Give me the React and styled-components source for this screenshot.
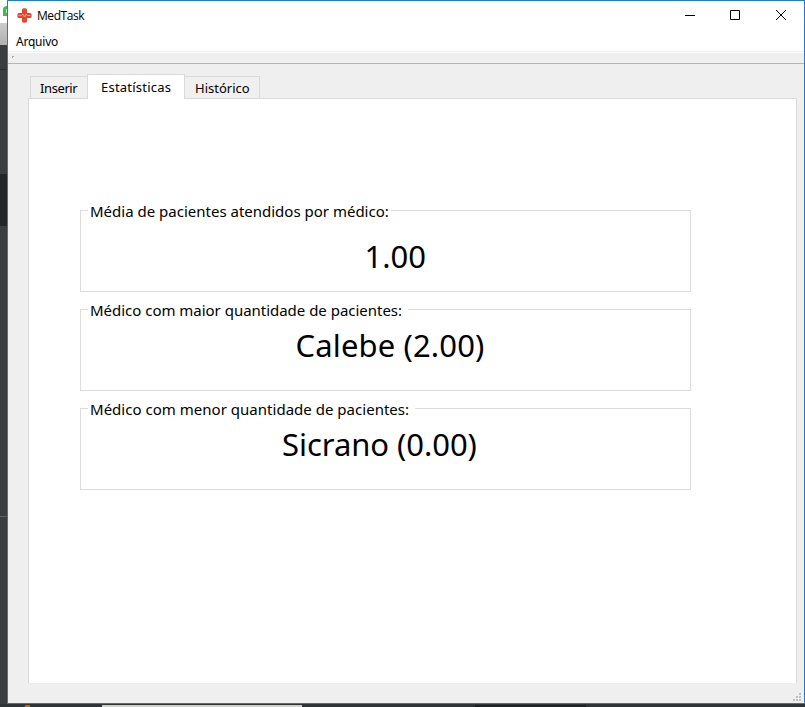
import React from 'react';
import styled, { createGlobalStyle } from 'styled-components';

const Global = createGlobalStyle`
  * { box-sizing: border-box; }
  body { margin: 0; overflow: hidden; background: #3c3d3e; font-family: "Noto Sans", sans-serif; color: #000; }
`;

const Desktop = styled.div`
  display: grid;
  grid-template: 704px 3px / 7px 798px;
  width: 805px;
  height: 707px;
`;

const Backdrop = styled.div`
  display: flex;
  flex-direction: column;
  overflow: hidden;
`;

const Band = styled.div`
  height: ${(p) => p.$h}px;
  background: ${(p) => p.$bg};
  flex: none;
`;

const BrowserBand = styled(Band)`
  display: flex;
  justify-content: flex-end;
  padding-top: 6px;
`;

const Window = styled.div`
  display: flex;
  flex-direction: column;
  border: 1px solid #1a7fd0;
  background: #efefef;
`;

const TitleBar = styled.div`
  display: flex;
  align-items: center;
  height: 28px;
  padding-left: 9px;
  background: #fff;
`;

const Title = styled.span`
  flex: 1;
  margin-left: 5px;
  padding-top: 2px;
  font: 12px/16px "Open Sans", sans-serif;
  letter-spacing: ${(p) => p.$ls}px;
`;

const WindowButton = styled.div`
  display: flex;
  justify-content: center;
  width: 46px;
`;

const MinimizeButton = styled(WindowButton)`
  padding-left: 2px;
`;

const MenuBar = styled.div`
  height: 24px;
  padding: 4px 0 0 8px;
  background: #fff;
  border-bottom: 1px solid #fff;
  box-shadow: inset 0 -1px #efefef;
  font-size: 12px;
  line-height: 17px;
`;

const MenuItem = styled.span`
  letter-spacing: ${(p) => p.$ls}px;
`;

const ToolBar = styled.div`
  height: 11px;
  padding: 2px 0 0 3px;
  border-bottom: 1px solid #b5b5b5;
  svg { display: block; }
`;

const Body = styled.div`
  flex: 1;
  display: flex;
  flex-direction: column;
  padding: 10px 7px 20px 20px;
`;

const TabList = styled.div`
  display: flex;
  align-items: flex-end;
  height: 25px;
  padding-left: 2px;
  margin-bottom: -1px;
  z-index: 1;
`;

const Tab = styled.div`
  width: ${(p) => p.$w}px;
  height: ${(p) => (p.$active ? 25 : 23)}px;
  margin-left: ${(p) => (p.$active ? -1 : 0)}px;
  padding: ${(p) => (p.$active ? '3px 0 0 13px' : p.$joined ? '2px 0 0 10px' : '2px 0 0 9px')};
  border: 1px solid #d9d9d9;
  border-left-width: ${(p) => (p.$joined ? 0 : 1)}px;
  border-bottom: ${(p) => (p.$active ? 'none' : '1px solid #d9d9d9')};
  background: ${(p) => (p.$active ? '#fff' : '#f0f0f0')};
  font-size: 13px;
  line-height: 18px;
  white-space: nowrap;
  letter-spacing: ${(p) => p.$ls}px;
`;

const Panel = styled.div`
  flex: 1;
  display: flex;
  flex-direction: column;
  gap: 17px;
  padding: 111px 0 0 51px;
  background: #fff;
  border: 1px solid #d9d9d9;
  border-bottom: none;
`;

const Group = styled.section`
  width: 611px;
  height: 82px;
  border: 1px solid #dcdcdc;
`;

const GroupTitle = styled.div`
  width: ${(p) => p.$w}px;
  height: 20px;
  margin: -10px 0 0 7px;
  padding-left: 2px;
  background: #fff;
  font-size: 15px;
  line-height: 20px;
  white-space: nowrap;
  letter-spacing: ${(p) => p.$ls}px;
`;

const Value = styled.div`
  padding: ${(p) => p.$top}px 0 0 ${(p) => p.$left}px;
  font-size: 31px;
  line-height: 42px;
  white-space: nowrap;
  letter-spacing: ${(p) => p.$ls}px;
`;

const StatusBar = styled.div`
  display: flex;
  justify-content: flex-end;
  height: 10px;
  margin-top: -10px;
  padding-right: 3px;
`;

const Taskbar = styled.div`
  grid-column: 1 / -1;
  display: flex;
  align-items: flex-end;
  background: #2f3536;
`;

const TaskSegment = styled.div`
  width: ${(p) => p.$w}px;
  height: 2px;
  background: ${(p) => p.$bg};
`;

const Logo = () => (
  <svg width="15" height="15" viewBox="0 0 15 15">
    <path d="M5 1.5Q5 .3 7.5 .3T10 1.5V5h3.5q1.2 0 1.2 2.5T13.500 10H10v3.500q0 1.200-2.500 1.200T5 13.500V10H1.500Q.3 10 .3 7.500T1.500 5H5z" fill="#e8472b" />
    <path d="M1.500 7.500h3l1.500-1.500 1.500 3 1.500-3 1.500 1.500h3" fill="none" stroke="#f5a592" strokeWidth="1" />
  </svg>
);

const stats = [
  { title: 'Média de pacientes atendidos por médico:', w: 303, ls: 0, value: '1.00', top: 14, left: 283.5, vls: 0 },
  { title: 'Médico com maior quantidade de pacientes:', w: 320, ls: -0.02, value: 'Calebe (2.00)', top: 4, left: 214.5, vls: 0.14 },
  { title: 'Médico com menor quantidade de pacientes:', w: 327, ls: 0.02, value: 'Sicrano (0.00)', top: 4, left: 201, vls: -0.05 },
];

export default function App() {
  return (
    <>
      <Global />
      <Desktop>
        <Backdrop>
          <BrowserBand $h={23} $bg="#fff">
            <svg width="4" height="10"><path d="M4 0Q0 0 0 4v6h4z" fill="#3dbb55" /><path d="M3 3h1v4H3z" fill="#b9e6c0" /></svg>
          </BrowserBand>
          <Band $h={22} $bg="linear-gradient(#ccc,#b0b0b0)" />
          <Band $h={24} $bg="#3b3c3d" />
          <Band $h={1} $bg="#2a2b2c" />
          <Band $h={104} $bg="#3c3d3e" />
          <Band $h={52} $bg="#242526" />
          <Band $h={290} $bg="#3c3d3e" />
          <Band $h={1} $bg="#606162" />
          <Band $h={187} $bg="#3c3d3e" />
        </Backdrop>
        <Window>
          <TitleBar>
            <Logo />
            <Title $ls={-0.45}>MedTask</Title>
            <MinimizeButton><svg width="10" height="10"><path d="M0 5.5h10" stroke="#000" /></svg></MinimizeButton>
            <WindowButton><svg width="10" height="10"><path d="M.5.5h9v9h-9z" fill="none" stroke="#000" /></svg></WindowButton>
            <WindowButton><svg width="10" height="10"><path d="M0 0l10 10M10 0L0 10" stroke="#000" /></svg></WindowButton>
          </TitleBar>
          <MenuBar><MenuItem $ls={-0.22}>Arquivo</MenuItem></MenuBar>
          <ToolBar><svg width="4" height="4"><path d="M1 1h2v2H1z" fill="#fff" /><path d="M1 1h2v1H2v1H1z" fill="#aaa" /></svg></ToolBar>
          <Body>
            <TabList>
              <Tab $w={58} $ls={-0.4}>Inserir</Tab>
              <Tab $w={98} $ls={0.22} $active>Estatísticas</Tab>
              <Tab $w={75} $ls={0} $joined>Histórico</Tab>
            </TabList>
            <Panel>
              {stats.map((s) => (
                <Group key={s.title}>
                  <GroupTitle $w={s.w} $ls={s.ls}>{s.title}</GroupTitle>
                  <Value $top={s.top} $left={s.left} $ls={s.vls}>{s.value}</Value>
                </Group>
              ))}
            </Panel>
          </Body>
          <StatusBar>
            <svg width="8" height="8"><path d="M6 0h2v2H6zM3 3h2v2H3zM6 3h2v2H6zM0 6h2v2H0zM3 6h2v2H3zM6 6h2v2H6z" fill="#bfbfbf" /></svg>
          </StatusBar>
        </Window>
        <Taskbar>
          <TaskSegment $w={25} $bg="#2f3536" />
          <TaskSegment $w={5} $bg="#b06a12" />
          <TaskSegment $w={72} $bg="#2f3536" />
          <TaskSegment $w={200} $bg="#d0d0c8" />
          <TaskSegment $w={173} $bg="#2f3536" />
          <TaskSegment $w={111} $bg="#1d2223" />
        </Taskbar>
      </Desktop>
    </>
  );
}
